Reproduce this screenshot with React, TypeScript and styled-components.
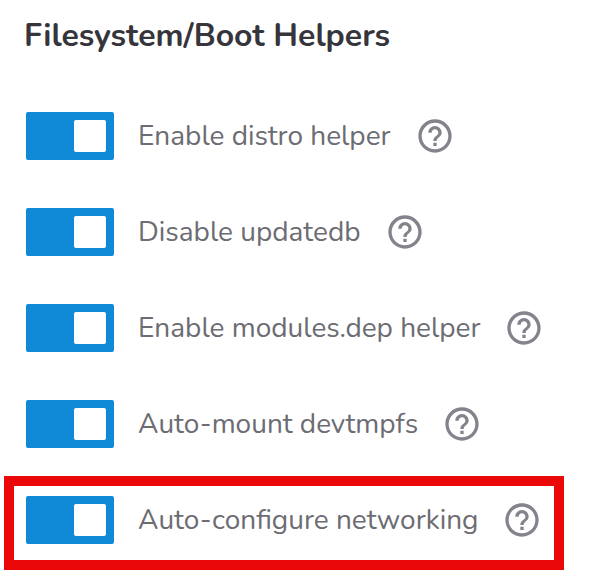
import React, { useState } from 'react';
import styled, { createGlobalStyle } from 'styled-components';
import { MdHelpOutline } from 'react-icons/md';

const GlobalStyle = createGlobalStyle`
  * { box-sizing: border-box; }
  body {
    margin: 0;
    background: #ffffff;
    font-family: Nunito, "Open Sans", sans-serif;
  }
`;

const Section = styled.section`
  padding: 12px 4px;
`;

const Heading = styled.h2`
  margin: 0 0 32px 20px;
  color: #35353b;
  font-size: 32px;
  line-height: 48px;
  font-weight: 700;
`;

const HelperList = styled.div`
  display: flex;
  flex-direction: column;
  align-items: flex-start;
  gap: 2px;
`;

const Row = styled.div<{ $highlighted?: boolean }>`
  display: flex;
  align-items: center;
  gap: 24px;
  padding: 10px 12px 16px;
  border: 10px solid ${({ $highlighted }) => ($highlighted ? '#ea0808' : 'transparent')};
`;

const Label = styled.label`
  display: flex;
  align-items: center;
  gap: 24px;
  color: #6c6c73;
  font-size: 28px;
  line-height: 40px;
  white-space: nowrap;
  cursor: pointer;
`;

const Toggle = styled.input`
  appearance: none;
  flex: none;
  display: flex;
  align-items: center;
  width: 88px;
  height: 48px;
  margin: 0;
  padding: 0 8px;
  border-radius: 2px;
  background: #888f91;
  cursor: pointer;

  &::before {
    content: '';
    width: 32px;
    height: 32px;
    border-radius: 2px;
    background: #ffffff;
  }

  &:checked {
    justify-content: flex-end;
    background: #108ad6;
  }
`;

const HelpButton = styled.button`
  display: flex;
  padding: 0;
  border: 0;
  background: none;
  color: #83838c;
  font-size: 40px;
  cursor: pointer;
`;

const helpers = [
  { id: 'distro', label: 'Enable distro helper' },
  { id: 'updatedb', label: 'Disable updatedb' },
  { id: 'modules', label: 'Enable modules.dep helper' },
  { id: 'devtmpfs', label: 'Auto-mount devtmpfs' },
  { id: 'network', label: 'Auto-configure networking', highlighted: true },
];

export default function App() {
  const [enabled, setEnabled] = useState<Record<string, boolean>>(
    Object.fromEntries(helpers.map((h) => [h.id, true])),
  );
  return (
    <>
      <GlobalStyle />
      <Section>
        <Heading>Filesystem/Boot Helpers</Heading>
        <HelperList>
          {helpers.map((h) => (
            <Row key={h.id} $highlighted={h.highlighted}>
              <Label>
                <Toggle
                  type="checkbox"
                  checked={enabled[h.id]}
                  onChange={(e) => setEnabled({ ...enabled, [h.id]: e.target.checked })}
                />
                {h.label}
              </Label>
              <HelpButton type="button" aria-label={`Help: ${h.label}`}>
                <MdHelpOutline />
              </HelpButton>
            </Row>
          ))}
        </HelperList>
      </Section>
    </>
  );
}
